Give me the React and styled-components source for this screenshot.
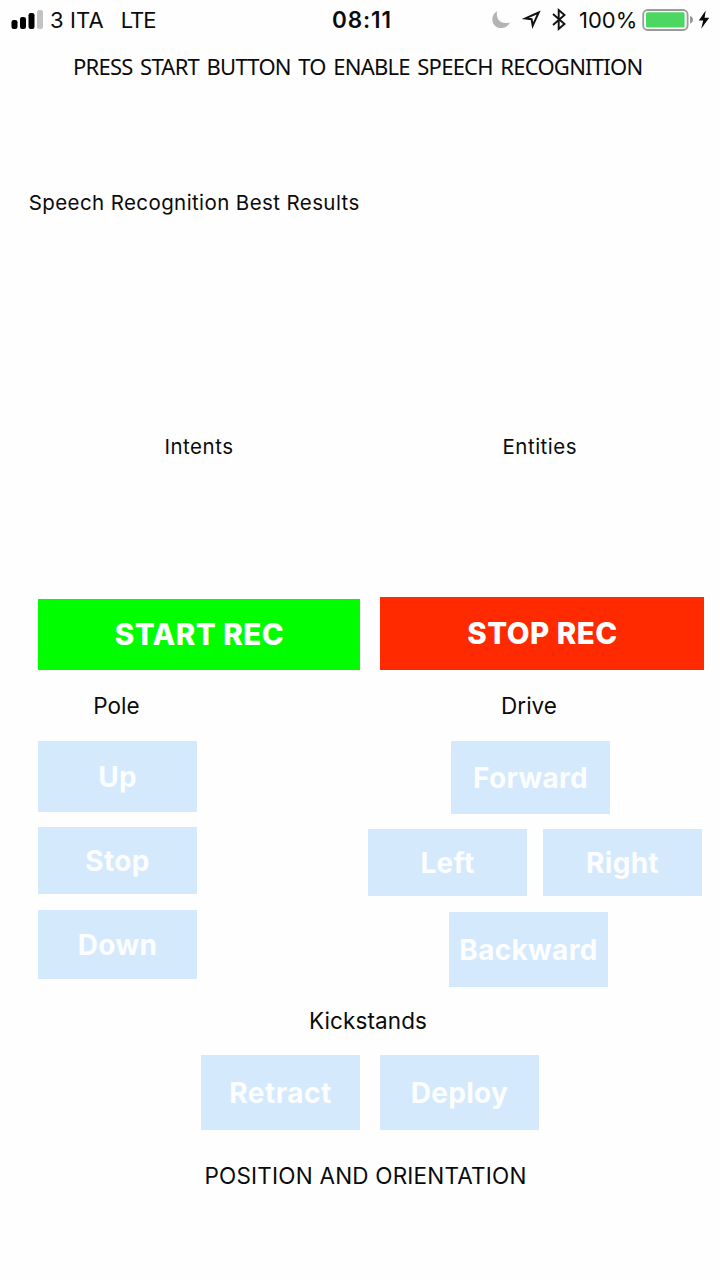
import React from 'react';
import styled, { createGlobalStyle } from 'styled-components';

const GlobalStyle = createGlobalStyle`
  * { box-sizing: border-box; }
  body { margin: 0; background: #fff; }
`;

const Screen = styled.main`
  width: 719px;
  height: 1280px;
  overflow: hidden;
  background: #fefefe;
  color: #0b0b0b;
  font-family: Inter, 'Liberation Sans', sans-serif;
  display: flex;
  flex-direction: column;
`;

const StatusBar = styled.header`
  height: 40px;
  display: grid;
  grid-template-columns: 332px 1fr 227px;
  align-items: center;
  font-size: 22px;
  line-height: 40px;
  white-space: nowrap;
`;

const StatusLeft = styled.div`
  display: flex;
  align-items: center;
  padding-left: 11px;
`;

const StatusText = styled.span`
  margin-left: ${(p) => p.$gap || 0}px;
  letter-spacing: ${(p) => p.$spacing || 0}px;
`;

const Clock = styled.time`
  font-weight: 600;
  font-size: 22.5px;
  letter-spacing: ${(p) => p.$spacing || 0}px;
`;

const StatusRight = styled.div`
  display: flex;
  align-items: center;
  svg { display: block; flex: none; }
  svg:last-child { margin-left: auto; }
`;

const Title = styled.h1`
  margin: 0;
  height: 54px;
  padding-left: 73px;
  font: 400 22px/52px 'Noto Sans', 'Open Sans', sans-serif;
  letter-spacing: ${(p) => p.$spacing}px;
  word-spacing: 2.5px;
  white-space: nowrap;
`;

const Results = styled.section`
  height: 244px;
  padding: 94px 0 0 28.7px;
`;

const Understanding = styled.section`
  height: 259px;
  padding-top: 94px;
  display: grid;
  grid-template-columns: 164.5px 338px 1fr;
  > :first-child { grid-column: 2; }
`;

const Label = styled.h2`
  margin: 0;
  font-weight: 400;
  font-size: ${(p) => p.$size || 20.5}px;
  line-height: 30px;
  letter-spacing: ${(p) => p.$spacing || 0}px;
  white-space: nowrap;
`;

const Recording = styled.section`
  height: 73px;
  padding: 0 15px 0 38px;
  display: flex;
  align-items: flex-end;
  gap: 20px;
`;

const RecButton = styled.button`
  width: ${(p) => p.$width}px;
  height: ${(p) => p.$height}px;
  padding: 0 0 1px 1px;
  border: 0;
  background: ${(p) => p.$color};
  color: #fff;
  font: 800 29.5px Inter, sans-serif;
  letter-spacing: ${(p) => p.$spacing || 0}px;
`;

const Controls = styled.section`
  display: flex;
  justify-content: space-between;
  height: 335px;
  padding: 21px 17px 0 38px;
`;

const Column = styled.div`
  display: flex;
  flex-direction: column;
  align-items: center;
  width: ${(p) => p.$width}px;
  > h2 { margin-right: ${(p) => p.$shift}px; }
`;

const Stack = styled.div`
  display: flex;
  flex-direction: column;
  align-items: center;
  gap: ${(p) => p.$gap}px;
  margin-top: 20px;
`;

const Row = styled.div`
  display: flex;
  gap: ${(p) => p.$gap}px;
`;

const ActionButton = styled.button`
  width: 159px;
  height: ${(p) => p.$height}px;
  margin: 0 ${(p) => p.$nudge || 0}px 0 0;
  padding: 1px 0 0;
  border: 0;
  background: #d5e9fd;
  color: #fcfdfe;
  font: 700 28px Inter, sans-serif;
  letter-spacing: ${(p) => p.$spacing ?? 0.3}px;
`;

const Kickstands = styled.section`
  display: flex;
  flex-direction: column;
  align-items: center;
  padding: 1px 0 0 21px;
  > h2 { margin-right: 4px; }
  > div { margin-top: 19px; }
`;

const Footer = styled.footer`
  padding: 31px 0 0 204.5px;
`;

const Signal = () => (
  <svg width="32" height="20" viewBox="0 0 32 20">
    <rect x=".5" y="10" width="6" height="9" rx="2.2" />
    <rect x="9" y="7" width="6" height="12" rx="2.2" />
    <rect x="17.5" y="3" width="6" height="16" rx="2.2" />
    <rect x="26" y="0" width="6" height="19" rx="2" fill="#c3c3c3" />
  </svg>
);

const StatusIcons = () => (
  <svg width="87" height="32" viewBox="492 4 87 32">
    <path d="M497.2 11.3C490.5 14.7 491.1 23.8 496.5 26.9C501.5 29.7 508 27.3 510 22.2C505.5 24.2 500.4 22.5 498.5 19.7C496.8 17.1 496.5 14.2 497.2 11.3Z" fill="#b4b4b4" />
    <path d="M538.7 12.5L525.4 18.4L531.6 19.2L532.7 25.7Z" fill="none" stroke="#111" strokeWidth="2" strokeLinejoin="miter" />
    <path d="M553 14L564.5 24L558.7 29V10L564.5 15L553 25" fill="none" stroke="#111" strokeWidth="1.9" />
  </svg>
);

const Battery = () => (
  <svg width="77" height="32" viewBox="642 4 77 32">
    <rect x="643.2" y="10" width="44.4" height="20" rx="4.5" fill="#fff" stroke="#9b9b9b" strokeWidth="1.8" />
    <rect x="646" y="12.3" width="38.6" height="15.3" rx="1.5" fill="#4cd763" />
    <path d="M690 16C694 17 694 22.5 690 23.5Z" fill="#969696" />
    <path d="M705.7 10.5L698.8 20.5H703.2L701.2 28.7L709.2 17.7H704.6Z" fill="#090909" />
  </svg>
);

export default function App() {
  return (
    <>
      <GlobalStyle />
      <Screen>
        <StatusBar>
          <StatusLeft>
            <Signal />
            <StatusText $gap={7} $spacing={0.1}>3 ITA</StatusText>
            <StatusText $gap={17} $spacing={-1}>LTE</StatusText>
          </StatusLeft>
          <Clock $spacing={0.9}>08:11</Clock>
          <StatusRight>
            <StatusIcons />
            <StatusText>100%</StatusText>
            <Battery />
          </StatusRight>
        </StatusBar>

        <Title $spacing={-0.75}>PRESS START BUTTON TO ENABLE SPEECH RECOGNITION</Title>

        <Results>
          <Label $spacing={0.4}>Speech Recognition Best Results</Label>
        </Results>

        <Understanding>
          <Label $spacing={0.5}>Intents</Label>
          <Label $spacing={0.5}>Entities</Label>
        </Understanding>

        <Recording>
          <RecButton $width={322} $height={71} $spacing={0.5} $color="#00fe00">START REC</RecButton>
          <RecButton $width={324} $height={73} $spacing={0.5} $color="#ff2a00">STOP REC</RecButton>
        </Recording>

        <Controls>
          <Column $width={159} $shift={2}>
            <Label $size={22.5}>Pole</Label>
            <Stack $gap={15.6}>
              <ActionButton $height={70.6}>Up</ActionButton>
              <ActionButton $height={67}>Stop</ActionButton>
              <ActionButton $height={69}>Down</ActionButton>
            </Stack>
          </Column>
          <Column $width={334} $shift={12}>
            <Label $size={22.5}>Drive</Label>
            <Stack $gap={15.5}>
              <ActionButton $height={72.5} $nudge={9}>Forward</ActionButton>
              <Row $gap={16}>
                <ActionButton $height={67}>Left</ActionButton>
                <ActionButton $height={67}>Right</ActionButton>
              </Row>
              <ActionButton $height={75} $nudge={13}>Backward</ActionButton>
            </Stack>
          </Column>
        </Controls>

        <Kickstands>
          <Label $size={22.5} $spacing={0.1}>Kickstands</Label>
          <Row $gap={20}>
            <ActionButton $height={75} $spacing={0.5}>Retract</ActionButton>
            <ActionButton $height={75}>Deploy</ActionButton>
          </Row>
        </Kickstands>

        <Footer>
          <Label $size={22.5} $spacing={0.2}>POSITION AND ORIENTATION</Label>
        </Footer>
      </Screen>
    </>
  );
}
